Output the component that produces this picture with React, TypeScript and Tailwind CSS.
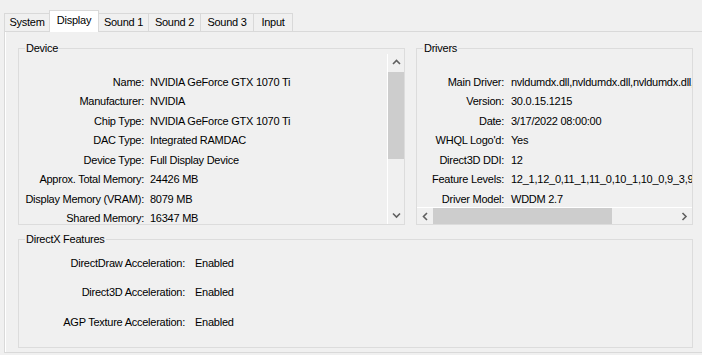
import type { ReactNode } from "react";

const tabs: [string, string][] = [
  ["System", "w-[46px]"],
  ["Display", "w-[50px]"],
  ["Sound 1", "w-[51px]"],
  ["Sound 2", "w-[53px]"],
  ["Sound 3", "w-[54px]"],
  ["Input", "w-[40px]"],
];

const deviceRows: [string, string][] = [
  ["Name:", "NVIDIA GeForce GTX 1070 Ti"],
  ["Manufacturer:", "NVIDIA"],
  ["Chip Type:", "NVIDIA GeForce GTX 1070 Ti"],
  ["DAC Type:", "Integrated RAMDAC"],
  ["Device Type:", "Full Display Device"],
  ["Approx. Total Memory:", "24426 MB"],
  ["Display Memory (VRAM):", "8079 MB"],
  ["Shared Memory:", "16347 MB"],
];

const driverRows: [string, string][] = [
  ["Main Driver:", "nvldumdx.dll,nvldumdx.dll,nvldumdx.dll,nvldumdx.dll"],
  ["Version:", "30.0.15.1215"],
  ["Date:", "3/17/2022 08:00:00"],
  ["WHQL Logo'd:", "Yes"],
  ["Direct3D DDI:", "12"],
  ["Feature Levels:", "12_1,12_0,11_1,11_0,10_1,10_0,9_3,9_2,9_1"],
  ["Driver Model:", "WDDM 2.7"],
];

const features: [string, string][] = [
  ["DirectDraw Acceleration:", "Enabled"],
  ["Direct3D Acceleration:", "Enabled"],
  ["AGP Texture Acceleration:", "Enabled"],
];

function Chevron({ dir }: { dir: "up" | "down" | "left" | "right" }) {
  const paths = {
    up: "M1 5 L4.5 1.5 L8 5",
    down: "M1 1.5 L4.5 5 L8 1.5",
    left: "M5 1 L1.5 4.5 L5 8",
    right: "M1.5 1 L5 4.5 L1.5 8",
  };
  const vertical = dir === "up" || dir === "down";
  return (
    <svg
      width={vertical ? 9 : 7}
      height={vertical ? 7 : 9}
      viewBox={vertical ? "0 0 9 7" : "0 0 7 9"}
      fill="none"
      stroke="#606060"
      strokeWidth="1.6"
    >
      <path d={paths[dir]} />
    </svg>
  );
}

function GroupBox({
  title,
  className,
  children,
}: {
  title: string;
  className: string;
  children: ReactNode;
}) {
  return (
    <div className={`relative border border-[#dcdcdc] ${className}`}>
      <span className="absolute left-[6px] top-[-9px] bg-[#f0f0f0] px-[1px] leading-[16px]">
        {title}
      </span>
      {children}
    </div>
  );
}

export default function App() {
  return (
    <div className="h-[355px] w-[702px] overflow-hidden bg-[#f0f0f0] font-['Liberation_Sans',Arial,sans-serif] text-[11px] tracking-[-0.25px] text-black">
      <div className="flex h-[31px] items-end pl-[4px]">
        {tabs.map(([tab, width]) => {
          const active = tab === "Display";
          return (
            <div
              key={tab}
              className={`-ml-px flex items-center justify-center border border-b-0 border-[#d9d9d9] first:ml-0 ${width} ${
                active
                  ? "relative z-10 -mb-px h-[22px] bg-white pb-[3px]"
                  : "h-[18px] bg-[#f0f0f0]"
              }`}
            >
              {tab}
            </div>
          );
        })}
      </div>

      <div className="ml-[4px] h-[322px] border border-r-0 border-[#d9d9d9] bg-[#f0f0f0] pl-[13px] pt-[16px] shadow-[inset_1px_0_0_#fff]">
        <div className="flex gap-[11px]">
          <GroupBox title="Device" className="h-[177px] w-[387px]">
            <div className="mt-[5px] flex h-[170px]">
              <div className="flex-1 overflow-hidden pt-[18px]">
                {deviceRows.map(([label, value]) => (
                  <div key={label} className="flex h-[19.5px] items-center whitespace-nowrap">
                    <span className="w-[125px] shrink-0 text-right">{label}</span>
                    <span className="pl-[6px]">{value}</span>
                  </div>
                ))}
              </div>
              <div className="flex w-[17px] flex-col border-l border-white">
                <div className="flex h-[17px] items-center justify-center">
                  <Chevron dir="up" />
                </div>
                <div className="mt-[1px] h-[87px] bg-[#cdcdcd]" />
                <div className="flex-1" />
                <div className="flex h-[17px] items-center justify-center">
                  <Chevron dir="down" />
                </div>
              </div>
            </div>
          </GroupBox>

          <GroupBox title="Drivers" className="flex h-[177px] w-[277px] flex-col">
            <div className="mt-[5px] flex-1 overflow-hidden pt-[18px]">
              {driverRows.map(([label, value]) => (
                <div key={label} className="flex h-[19.5px] items-center whitespace-nowrap">
                  <span className="w-[87px] shrink-0 text-right">{label}</span>
                  <span className="pl-[7px]">{value}</span>
                </div>
              ))}
            </div>
            <div className="flex h-[17px] border-t border-white">
              <div className="flex w-[16px] items-center justify-center">
                <Chevron dir="left" />
              </div>
              <div className="w-[179px] bg-[#cdcdcd]" />
              <div className="flex-1" />
              <div className="flex w-[16px] items-center justify-center">
                <Chevron dir="right" />
              </div>
            </div>
          </GroupBox>
        </div>

        <GroupBox title="DirectX Features" className="mt-[14px] h-[109px] w-[675px]">
          <div className="pt-[8px]">
            {features.map(([label, value]) => (
              <div key={label} className="flex h-[29.5px] items-center whitespace-nowrap">
                <span className="w-[166px] shrink-0 text-right">{label}</span>
                <span className="pl-[10px]">{value}</span>
              </div>
            ))}
          </div>
        </GroupBox>
      </div>
    </div>
  );
}
